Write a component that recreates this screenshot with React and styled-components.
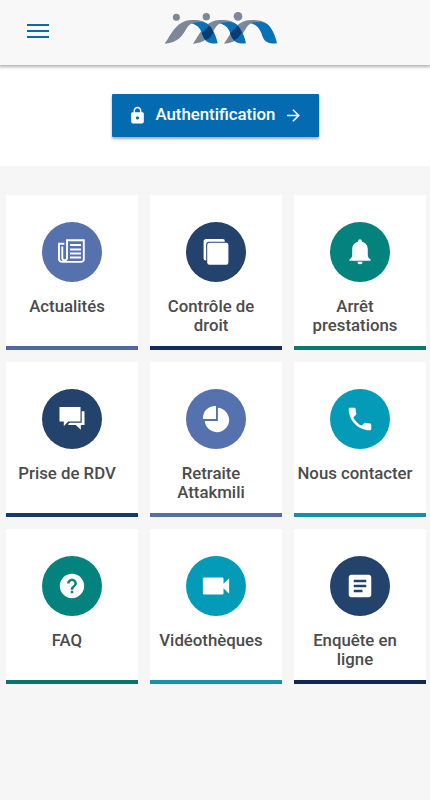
import React from "react";
import styled, { createGlobalStyle } from "styled-components";
import {
  IoMdArrowForward,
  IoMdCall,
  IoMdHelpCircle,
  IoMdPie,
  IoMdVideocam,
} from "react-icons/io";
import { MdArticle, MdLock } from "react-icons/md";

const GlobalStyle = createGlobalStyle`
  * {
    box-sizing: border-box;
  }
  body {
    margin: 0;
    background-color: #f6f6f6;
    font-family: Roboto, "Liberation Sans", sans-serif;
  }
`;

const Page = styled.div`
  min-height: 800px;
  background-color: #f6f6f6;
`;

const Header = styled.header`
  position: relative;
  display: grid;
  grid-template-columns: 1fr auto 1fr;
  height: 65px;
  padding: 0 27px;
  background-color: #f8f8f8;
  box-shadow: 0 1px 3px 1px rgba(0, 0, 0, 0.3);
`;

const MenuButton = styled.button`
  display: flex;
  flex-direction: column;
  gap: 3.700px;
  width: 22px;
  margin-top: 23.800px;
  padding: 0;
  border: 0;
  background: none;
  align-self: start;
`;

const MenuLine = styled.span`
  height: 2.400px;
  background-color: #0869ad;
`;

const Logo = styled.svg`
  width: 114px;
  height: 36px;
  margin: 10px 0 0 12px;
`;

const Hero = styled.section`
  display: flex;
  justify-content: center;
  height: 101px;
  padding-top: 29px;
  background-color: #ffffff;
`;

const LoginButton = styled.button`
  display: flex;
  align-items: center;
  width: 207px;
  height: 43px;
  padding: 0 0 1px 16px;
  border: 0;
  border-radius: 1px;
  background-color: #056bb1;
  color: #ffffff;
  font: 500 16.8px Roboto, sans-serif;
  box-shadow: 0 2px 3px rgba(0, 0, 0, 0.35);

  svg {
    width: 19px;
    height: 19px;
  }
`;

const LoginText = styled.span`
  margin: 0 9px 2px;
`;

const Grid = styled.main`
  display: grid;
  grid-template-columns: repeat(3, 132px);
  grid-auto-rows: 155px;
  gap: 12px;
  padding: 29px 4px 0 6px;
`;

const Card = styled.div`
  display: flex;
  flex-direction: column;
  align-items: center;
  padding-top: 27px;
  background-color: #ffffff;
  border-bottom: 4px solid ${(props) => props.$line};
`;

const Circle = styled.div`
  display: flex;
  align-items: center;
  justify-content: center;
  width: 60px;
  height: 60px;
  border-radius: 50%;
  background-color: ${(props) => props.$color};
  color: #ffffff;

  svg {
    width: ${(props) => props.$size}px;
    height: ${(props) => props.$size}px;
  }
`;

const Label = styled.p`
  width: 100%;
  margin: 15px 0 0;
  padding-right: 10px;
  color: #4b4b4b;
  font-size: 16.8px;
  font-weight: 500;
  line-height: 19.4px;
  text-align: center;
`;

const NewsIcon = () => (
  <svg viewBox="0 0 30 30" fill="none" stroke="currentColor" strokeWidth="1.900">
    <path d="M10 5.200V3.200h16.800v19.200a2.500 2.500 0 0 1-2.500 2.500H5a3 3 0 0 1-3-3V6.800h5.400" />
    <path d="M10 4v17.500a2.400 2.400 0 0 1-4.700 0V9.500" />
    <path d="M13 8h11M13 12.500h11M13 16.500h11M13 20.500h11" />
  </svg>
);

const CopyIcon = () => (
  <svg viewBox="0 0 26 26" fill="currentColor">
    <path d="M3.200 0h16.600a2 2 0 0 1 2 2v.800H6.200a3 3 0 0 0-3 3v15.800H2.600a2 2 0 0 1-2-2V2.600A2.600 2.600 0 0 1 3.200 0z" />
    <rect x="4.200" y="3.800" width="21.200" height="22" rx="2.200" />
  </svg>
);

const BellIcon = () => (
  <svg viewBox="0 0 26 26" fill="currentColor">
    <path d="M13 .200a1.900 1.900 0 0 1 1.900 1.900v.700c3.900.900 5.900 3.800 5.900 7.500v5.800c0 2 .800 3 2.800 4.400v1.200H2.400v-1.200c2-1.400 2.800-2.400 2.800-4.400v-5.800c0-3.700 2-6.600 5.900-7.500v-.700A1.900 1.900 0 0 1 13 .200z" />
    <path d="M10.500 22.700h5a2.500 2.500 0 0 1-5 0z" />
  </svg>
);

const ChatIcon = () => (
  <svg viewBox="0 0 26 26" fill="currentColor">
    <path d="M.500 1h21v14.500H9.200L4.800 20.300V15.500H.500z" />
    <path d="M22.700 5.200h2.800v13.800h-3.700v4.800l-5-4.800H9.300v-1l1.400-1.300h12z" />
  </svg>
);

const gris = "#7c8798";
const bleu = "#0871b8";

const Brand = () => (
  <Logo viewBox="42 30 342 108">
    <circle cx="79" cy="52" r="10.500" fill={gris} />
    <circle cx="169" cy="50" r="11" fill={gris} />
    <circle cx="264" cy="49" r="13" fill={gris} />
    <path
      fill={gris}
      d="M44 131C60 112 76 61 125 60c25-1 42 4 54 17-18-10-36-13-52-8C99 82 107 126 44 131z"
    />
    <path
      fill={gris}
      d="M129 131c16-19 32-70 81-71 25-1 42 4 54 17-18-10-36-13-52-8-28 13-20 57-83 62z"
    />
    <path
      fill={gris}
      d="M222 131c16-19 32-70 81-71 25-1 42 4 54 17-18-10-36-13-52-8-28 13-20 57-83 62z"
    />
    <path
      fill={bleu}
      d="M122 69c27-6 49-5 62 14 10 14 16 32 19 47-23 1-37-3-43-20-6-18-13-35-38-41z"
    />
    <path
      fill={bleu}
      d="M207 69c27-6 49-5 62 14 10 14 16 32 19 47-23 1-37-3-43-20-6-18-13-35-38-41z"
    />
    <path
      fill={bleu}
      d="M300 69c27-6 49-5 62 14 10 14 16 32 19 47-23 1-37-3-43-20-6-18-13-35-38-41z"
    />
    {/* croisement des bras */}
    <path fill="#083c76" d="M177 77c7 4 10 12 13 21-7 11-12 19-23 22-6-5-9-12-12-21 7-6 14-13 22-22z" />
    <path fill="#083c76" d="M262 77c7 4 10 12 13 21-7 11-12 19-23 22-6-5-9-12-12-21 7-6 14-13 22-22z" />
  </Logo>
);

const services = [
  { label: "Actualités", icon: NewsIcon, size: 30, color: "#5571ae", line: "#5068a0" },
  { label: "Contrôle de droit", icon: CopyIcon, size: 26, color: "#23426c", line: "#142e5b" },
  { label: "Arrêt prestations", icon: BellIcon, size: 26, color: "#03827e", line: "#087970" },
  { label: "Prise de RDV", icon: ChatIcon, size: 26, color: "#23426c", line: "#183b65" },
  { label: "Retraite Attakmili", icon: IoMdPie, size: 30, color: "#5571ae", line: "#5571a4" },
  { label: "Nous contacter", icon: IoMdCall, size: 30, color: "#049bb9", line: "#158fa7" },
  { label: "FAQ", icon: IoMdHelpCircle, size: 30, color: "#03827e", line: "#08756c" },
  { label: "Vidéothèques", icon: IoMdVideocam, size: 30, color: "#049bb9", line: "#1593aa" },
  { label: "Enquête en ligne", icon: MdArticle, size: 30, color: "#23426c", line: "#132850" },
];

const App = () => {
  return (
    <Page>
      <GlobalStyle />
      <Header>
        <MenuButton aria-label="Menu">
          <MenuLine />
          <MenuLine />
          <MenuLine />
        </MenuButton>
        <Brand />
      </Header>
      <Hero>
        <LoginButton>
          <MdLock />
          <LoginText>Authentification</LoginText>
          <IoMdArrowForward />
        </LoginButton>
      </Hero>
      <Grid>
        {services.map(({ label, icon: Icon, size, color, line }) => (
          <Card key={label} $line={line}>
            <Circle $color={color} $size={size}>
              <Icon />
            </Circle>
            <Label>{label}</Label>
          </Card>
        ))}
      </Grid>
    </Page>
  );
};

export default App;
